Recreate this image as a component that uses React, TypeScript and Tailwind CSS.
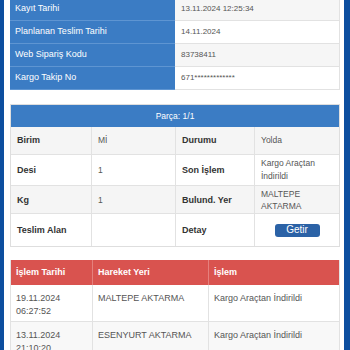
import React from 'react';

const info = [
  { label: 'Kayıt Tarihi', value: '13.11.2024 12:25:34' },
  { label: 'Planlanan Teslim Tarihi', value: '14.11.2024' },
  { label: 'Web Sipariş Kodu', value: '83738411' },
  { label: 'Kargo Takip No', value: '671*************' },
];

const moves = [
  { date: '19.11.2024', time: '06:27:52', place: 'MALTEPE AKTARMA', op: 'Kargo Araçtan İndirildi' },
  { date: '13.11.2024', time: '21:10:20', place: 'ESENYURT AKTARMA', op: 'Kargo Araçtan İndirildi' },
];

export default function App() {
  return (
    <div
      className="w-[350px] h-[350px] overflow-hidden bg-white flex"
      style={{ fontFamily: '"Liberation Sans", Arial, sans-serif' }}
    >
      <div className="w-[4px] shrink-0 bg-[#0d4e9f]" />
      <div className="flex-1 pl-[6px] pr-[4px] flex flex-col">
        {/* Gönderi bilgileri */}
        <div className="-mt-[2px] flex flex-col">
          {info.map((r, i) => (
            <div key={r.label} className="flex h-[23px]">
              <div className="w-[165px] bg-[#3b7cc4] border-b border-[#5e95d2] text-white text-[9px] pl-[5px] flex items-center">
                {r.label}
              </div>
              <div
                className={`flex-1 border-b border-r border-[#e2e2e2] text-[8px] text-[#555] pl-[6px] flex items-center ${
                  i % 2 === 0 ? 'bg-[#f6f6f6]' : 'bg-white'
                }`}
              >
                {r.value}
              </div>
            </div>
          ))}
        </div>

        {/* Parça */}
        <div className="mt-[14px] border border-[#dedede]">
          <div className="h-[22px] bg-[#3b7cc4] text-white text-[8.5px] flex items-center justify-center">
            Parça: 1/1
          </div>
          <div className="grid grid-cols-[81px_83px_80px_84px] text-[9px]">
            <Cell label>Birim</Cell>
            <Cell>Mİ</Cell>
            <Cell label first>Durumu</Cell>
            <Cell>Yolda</Cell>

            <Cell label white>Desi</Cell>
            <Cell white>1</Cell>
            <Cell label first white>Son İşlem</Cell>
            <Cell white>Kargo Araçtan<br />İndirildi</Cell>

            <Cell label tight>Kg</Cell>
            <Cell tight>1</Cell>
            <Cell label first tight>Bulund. Yer</Cell>
            <Cell tight>MALTEPE<br />AKTARMA</Cell>

            <Cell label white last>Teslim Alan</Cell>
            <Cell white last></Cell>
            <Cell label first white last>Detay</Cell>
            <div className="bg-white flex items-center justify-center h-[32px]">
              <button className="w-[45px] h-[13px] rounded-[3px] bg-[#2b62a6] text-white text-[10px] leading-none flex items-center justify-center">
                Getir
              </button>
            </div>
          </div>
        </div>

        {/* Hareketler */}
        <div className="mt-[13px] border-r border-l border-[#e2e2e2]">
          <div className="grid grid-cols-[82px_116px_1fr] h-[25px] bg-[#d9534f] text-white font-bold text-[9px]">
            <div className="pl-[5px] flex items-center border-r border-[#e5807d]">İşlem Tarihi</div>
            <div className="pl-[5px] flex items-center border-r border-[#e5807d]">Hareket Yeri</div>
            <div className="pl-[5px] flex items-center">İşlem</div>
          </div>
          {moves.map((m, i) => (
            <div
              key={i}
              className={`grid grid-cols-[82px_116px_1fr] h-[37px] border-b border-[#e2e2e2] text-[9px] text-[#555] leading-[13px] ${
                i % 2 === 0 ? 'bg-white' : 'bg-[#f8f8f8]'
              }`}
            >
              <div className="pl-[5px] pt-[7px] border-r border-[#e2e2e2]">
                {m.date}
                <br />
                {m.time}
              </div>
              <div className="pl-[5px] pt-[7px] border-r border-[#e2e2e2]">{m.place}</div>
              <div className="pl-[5px] pt-[7px]">{m.op}</div>
            </div>
          ))}
        </div>
      </div>
      <div className="w-[6px] shrink-0 bg-[#0d4e9f]" />
    </div>
  );
}

function Cell({
  children,
  label,
  first,
  white,
  last,
  tight,
}: {
  children?: React.ReactNode;
  label?: boolean;
  first?: boolean;
  white?: boolean;
  last?: boolean;
  tight?: boolean;
}) {
  return (
    <div
      className={`flex items-center pl-[6px] ${tight ? 'h-[28px] leading-[12px]' : 'leading-[13px]'} ${
        last ? 'h-[32px]' : tight ? '' : 'min-h-[28px] py-[2px]'
      } ${white ? 'bg-white' : 'bg-[#f5f5f5]'} ${
        label ? 'font-bold text-[#333] border-r border-[#e2e2e2]' : 'text-[#555] text-[8.5px]'
      } ${first ? 'border-l border-[#d6d6d6]' : ''} ${last ? '' : 'border-b border-[#e2e2e2]'}`}
    >
      {children}
    </div>
  );
}
